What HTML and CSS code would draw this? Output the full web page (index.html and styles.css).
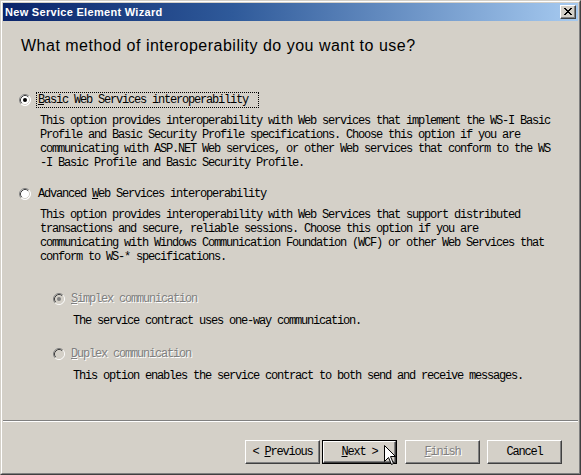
FILE: index.html
```html
<!DOCTYPE html>
<html>
<head>
<meta charset="utf-8">
<title>New Service Element Wizard</title>
<link rel="stylesheet" href="styles.css">
</head>
<body>
<div class="window">
  <div class="frame">
    <div class="titlebar">
      <span class="title">New Service Element Wizard</span>
      <span class="close-btn"><svg width="8" height="7" viewBox="0 0 8 7"><path d="M0 0h2v1h1v1h2V1h1V0h2v1H7v1H6v1H5v1h1v1h1v1h1v1H6V6H5V5H3v1H2v1H0V6h1V5h1V4h1V3H2V2H1V1H0z" fill="#000"/></svg></span>
    </div>
    <div class="content">
      <h1 class="heading">What method of interoperability do you want to use?</h1>

      <div class="option first">
        <div class="radio-row">
          <svg class="radio" width="12" height="12" viewBox="0 0 12 12"><circle cx="6" cy="6" r="5.5" fill="#fff"/><path d="M2.11 9.89A5.5 5.5 0 0 1 9.89 2.11" stroke="#808080" fill="none"/><path d="M9.89 2.11A5.5 5.5 0 0 1 2.11 9.89" stroke="#fff" fill="none"/><path d="M2.82 9.18A4.5 4.5 0 0 1 9.18 2.82" stroke="#404040" fill="none"/><path d="M9.18 2.82A4.5 4.5 0 0 1 2.82 9.18" stroke="#d4d0c8" fill="none"/><circle cx="6" cy="6" r="2" fill="#000"/></svg>
          <span class="label focus"><u>B</u>asic Web Services interoperability</span>
        </div>
        <p class="desc">This option provides interoperability with Web services that implement the WS-I Basic<br>Profile and Basic Security Profile specifications. Choose this option if you are<br>communicating with ASP.NET Web services, or other Web services that conform to the WS<br>-I Basic Profile and Basic Security Profile.</p>
      </div>

      <div class="option second">
        <div class="radio-row">
          <svg class="radio" width="12" height="12" viewBox="0 0 12 12"><circle cx="6" cy="6" r="5.5" fill="#fff"/><path d="M2.11 9.89A5.5 5.5 0 0 1 9.89 2.11" stroke="#808080" fill="none"/><path d="M9.89 2.11A5.5 5.5 0 0 1 2.11 9.89" stroke="#fff" fill="none"/><path d="M2.82 9.18A4.5 4.5 0 0 1 9.18 2.82" stroke="#404040" fill="none"/><path d="M9.18 2.82A4.5 4.5 0 0 1 2.82 9.18" stroke="#d4d0c8" fill="none"/></svg>
          <span class="label">Advanced <u>W</u>eb Services interoperability</span>
        </div>
        <p class="desc">This option provides interoperability with Web Services that support distributed<br>transactions and secure, reliable sessions. Choose this option if you are<br>communicating with Windows Communication Foundation (WCF) or other Web Services that<br>conform to WS-* specifications.</p>
      </div>

      <div class="suboptions">
        <div class="option sub simplex">
          <div class="radio-row">
            <svg class="radio" width="12" height="12" viewBox="0 0 12 12"><circle cx="6" cy="6" r="5.5" fill="#d4d0c8"/><path d="M2.11 9.89A5.5 5.5 0 0 1 9.89 2.11" stroke="#808080" fill="none"/><path d="M9.89 2.11A5.5 5.5 0 0 1 2.11 9.89" stroke="#fff" fill="none"/><path d="M2.82 9.18A4.5 4.5 0 0 1 9.18 2.82" stroke="#404040" fill="none"/><path d="M9.18 2.82A4.5 4.5 0 0 1 2.82 9.18" stroke="#d4d0c8" fill="none"/><circle cx="6" cy="6" r="2" fill="#808080"/></svg>
            <span class="label disabled"><u>S</u>implex communication</span>
          </div>
          <p class="desc">The service contract uses one-way communication.</p>
        </div>
        <div class="option sub duplex">
          <div class="radio-row">
            <svg class="radio" width="12" height="12" viewBox="0 0 12 12"><circle cx="6" cy="6" r="5.5" fill="#d4d0c8"/><path d="M2.11 9.89A5.5 5.5 0 0 1 9.89 2.11" stroke="#808080" fill="none"/><path d="M9.89 2.11A5.5 5.5 0 0 1 2.11 9.89" stroke="#fff" fill="none"/><path d="M2.82 9.18A4.5 4.5 0 0 1 9.18 2.82" stroke="#404040" fill="none"/><path d="M9.18 2.82A4.5 4.5 0 0 1 2.82 9.18" stroke="#d4d0c8" fill="none"/></svg>
            <span class="label disabled"><u>D</u>uplex communication</span>
          </div>
          <p class="desc">This option enables the service contract to both send and receive messages.</p>
        </div>
      </div>
    </div>
    <div class="separator"></div>
    <div class="buttons">
      <span class="btn prev"><span class="btn-text">&lt; <u>P</u>revious</span></span>
      <span class="btn default next"><span class="btn-inner"><span class="btn-text"><u>N</u>ext &gt;</span></span></span>
      <span class="btn disabled finish"><span class="btn-text"><u>F</u>inish</span></span>
      <span class="btn cancel"><span class="btn-text">Cancel</span></span>
    </div>
  </div>
  <svg class="cursor" width="13" height="21" viewBox="0 0 13 21"><path d="M0.5 0.5V16.5L4.5 12.5L7.5 19.5L9.5 18.5L6.5 11.5H11.5Z" fill="#fff" stroke="#000" stroke-linejoin="miter"/></svg>
</div>
</body>
</html>
```

FILE: styles.css
```css
html, body {
  margin: 0;
  padding: 0;
  background: #d4d0c8;
}

.window {
  position: relative;
  width: 581px;
  height: 475px;
  box-sizing: border-box;
  border: 1px solid;
  border-color: #d4d0c8 #404040 #404040 #d4d0c8;
  background: #d4d0c8;
}

.frame {
  height: 100%;
  box-sizing: border-box;
  border: 1px solid;
  border-color: #ffffff #808080 #808080 #ffffff;
  padding: 1px;
  display: flex;
  flex-direction: column;
}

.titlebar {
  height: 18px;
  flex: none;
  background: linear-gradient(to right, #0a246a 0%, #2f5a9a 40%, #a6caf0 100%);
  display: flex;
  align-items: center;
  justify-content: space-between;
  padding: 0 2px 0 2px;
}

.title {
  font-family: "Liberation Sans", Arial, sans-serif;
  font-weight: bold;
  font-size: 11px;
  letter-spacing: 0.3px;
  color: #ffffff;
  line-height: 18px;
}

.close-btn {
  width: 16px;
  height: 14px;
  box-sizing: border-box;
  background: #d4d0c8;
  border: 1px solid;
  border-color: #ffffff #404040 #404040 #ffffff;
  box-shadow: inset -1px -1px 0 #808080;
  display: flex;
  align-items: center;
  justify-content: center;
  padding: 0 1px 1px 0;
}

.close-btn svg {
  display: block;
}

.content {
  flex: 1;
  padding: 15px 0 0 16px;
}

.heading {
  margin: 0;
  font-family: "Liberation Sans", Arial, sans-serif;
  font-weight: normal;
  font-size: 16px;
  letter-spacing: 0.5px;
  line-height: 20px;
  color: #000;
  padding-left: 2px;
}

.option {
  font-family: "Liberation Mono", "Courier New", monospace;
  font-size: 12px;
  letter-spacing: -1.2px;
  color: #000;
}

.option.first { margin-top: 36px; }
.option.second { margin-top: 16px; }

.radio-row {
  display: flex;
  align-items: center;
  height: 16px;
}

.radio {
  flex: none;
  display: block;
}

.label {
  margin-left: 5px;
  border: 1px dotted transparent;
  padding: 0 10px 0 1px;
  line-height: 14px;
  white-space: nowrap;
}

.label.focus {
  border-color: #000;
}

.label.disabled {
  color: #808080;
  text-shadow: 1px 1px 0 #ffffff;
}

.option.sub .label {
  margin-left: 4px;
}

u {
  text-decoration: underline;
  text-underline-offset: 1px;
}

.desc {
  margin: 6px 0 0 21px;
  line-height: 14px;
  white-space: nowrap;
}

.suboptions {
  margin-left: 34px;
}

.option.sub.simplex { margin-top: 27px; }
.option.sub.duplex { margin-top: 18px; }

.option.sub .desc {
  margin-top: 7px;
  margin-left: 20px;
}

.separator {
  flex: none;
  height: 0;
  border-top: 1px solid #808080;
  border-bottom: 1px solid #ffffff;
}

.buttons {
  flex: none;
  height: 50px;
  box-sizing: border-box;
  padding: 18px 16px 0 0;
  display: flex;
  justify-content: flex-end;
  align-items: flex-start;
}

.btn {
  width: 75px;
  height: 24px;
  box-sizing: border-box;
  border: 1px solid;
  border-color: #ffffff #404040 #404040 #ffffff;
  box-shadow: inset -1px -1px 0 #808080, inset 1px 1px 0 #d4d0c8;
  display: flex;
  align-items: center;
  justify-content: center;
  font-family: "Liberation Mono", "Courier New", monospace;
  font-size: 12px;
  letter-spacing: -1.2px;
  color: #000;
  white-space: nowrap;
}

.btn-text {
  white-space: pre;
}

.btn.prev { margin-right: 2px; }
.btn.next { margin-right: 8px; }
.btn.finish { margin-right: 7px; }

.btn.default {
  border: 1px solid #000;
  box-shadow: none;
  padding: 0;
}

.btn-inner {
  width: 100%;
  height: 100%;
  box-sizing: border-box;
  border: 1px solid;
  border-color: #ffffff #404040 #404040 #ffffff;
  box-shadow: inset -1px -1px 0 #808080;
  display: flex;
  align-items: center;
  justify-content: center;
}

.btn.disabled {
  color: #808080;
  text-shadow: 1px 1px 0 #ffffff;
}

.cursor {
  position: absolute;
  left: 383px;
  top: 444px;
}
```
